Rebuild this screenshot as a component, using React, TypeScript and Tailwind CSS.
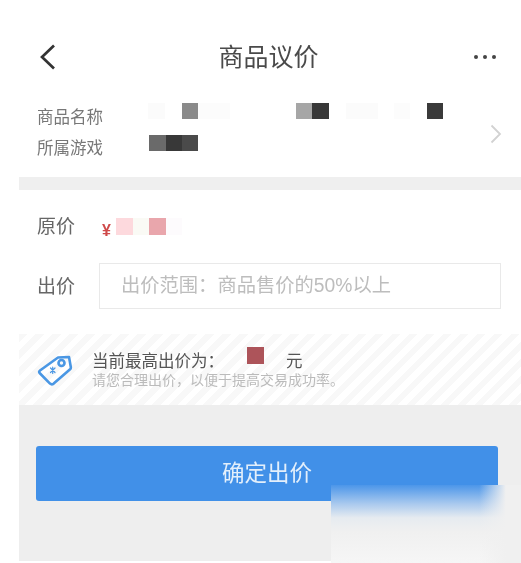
const font = "font-['Liberation_Sans','Noto_Sans_CJK_SC',sans-serif]";

// mosaic cells that hide the private values: [width, colour]
function Mosaic({ cells, h = "h-4" }: { cells: [number, string][]; h?: string }) {
    return (
        <div className="flex">
            {cells.map(([w, c], i) => (
                <div key={i} className={h} style={{ width: w, backgroundColor: c }} />
            ))}
        </div>
    );
}

function TagIcon() {
    return (
        <svg width="36" height="35" viewBox="0 0 36 35" fill="none" stroke="#4a97e4" strokeWidth="2.6" strokeLinejoin="round" strokeLinecap="round">
            <path d="M32 5 21 5.5 3 18.5Q1.6 19.6 2.6 21L13 31.6Q14.6 33 16.4 31.8L33.4 17Q34 16.2 33.8 15Z" />
            <circle cx="24.5" cy="11" r="3" />
            <path d="M13.5 16 18 20.5M18 16 13.5 20.5M15.7 15V21.5" strokeWidth="1.2" />
        </svg>
    );
}

export default function App() {
    return (
        <div className={`relative h-[563px] w-[521px] overflow-hidden bg-white ${font}`}>
            <div className="pl-[19px] blur-[0.5px]">
                <header className="flex h-[98px] items-center justify-between pl-[21px] pr-[25px] pt-[16px]">
                    <div className="w-[23px]">
                        <svg width="16" height="26" viewBox="0 0 16 26" fill="none" stroke="#333" strokeWidth="2.7">
                            <path d="M14 1.5 2 13l12 11.5" />
                        </svg>
                    </div>
                    <h1 className="text-[25px] font-normal leading-none text-[#4a4a4a]">商品议价</h1>
                    <div className="flex gap-[5px]">
                        <span className="h-1 w-1 rounded-full bg-[#444]" />
                        <span className="h-1 w-1 rounded-full bg-[#444]" />
                        <span className="h-1 w-1 rounded-full bg-[#444]" />
                    </div>
                </header>

                <section className="flex h-[79px] items-center justify-between pl-[18px] pr-[19px]">
                    <div className="mt-[5px] flex flex-col self-start">
                        <div className="flex h-[31px] items-start">
                            <span className="mt-[2px] w-[111px] text-[16.5px] leading-[24px] text-[#777]">商品名称</span>
                            <Mosaic
                                cells={[
                                    [17, "#fbfbfb"],
                                    [17, "#fff"],
                                    [16, "#8a8a8a"],
                                    [32, "#fcfcfc"],
                                    [66, "#fff"],
                                    [16, "#a6a6a6"],
                                    [17, "#383838"],
                                    [17, "#fff"],
                                    [32, "#fbfbfb"],
                                    [16, "#fff"],
                                    [16, "#fcfcfc"],
                                    [17, "#fff"],
                                    [16, "#3a3a3a"],
                                ]}
                            />
                        </div>
                        <div className="flex h-[31px] items-start">
                            <span className="mt-[2px] w-[112px] text-[16.5px] leading-[24px] text-[#777]">所属游戏</span>
                            <div className="mt-[1px]">
                                <Mosaic cells={[[17, "#6a6a6a"], [16, "#383838"], [16, "#4a4a4a"]]} />
                            </div>
                        </div>
                    </div>
                    <svg className="mt-[-7px]" width="12" height="20" viewBox="0 0 12 20" fill="none" stroke="#d2d2d2" strokeWidth="1.8">
                        <path d="M1.5 1.5 10 10l-8.5 8.5" />
                    </svg>
                </section>

                <div className="h-[13px] bg-[#efefef]" />

                <section className="h-[144px] pl-[18px] pr-[20px]">
                    <div className="flex h-[73px] items-center">
                        <span className="w-[65px] text-[19px] leading-none text-[#666]">原价</span>
                        <span className="mt-[8px] w-[14px] text-[16px] font-bold leading-none text-[#cf4a4a]">¥</span>
                        <div className="mt-[-1px]">
                            <Mosaic cells={[[17, "#fdd9dd"], [16, "#fafaf5"], [17, "#e9a6ac"], [16, "#fdfbfd"]]} h="h-[17px]" />
                        </div>
                    </div>
                    <div className="flex items-center">
                        <span className="w-[62px] text-[19px] leading-none text-[#666]">出价</span>
                        <input
                            readOnly
                            placeholder="出价范围：商品售价的50%以上"
                            className="h-[46px] flex-1 border-[1.5px] border-[#e9e9e9] pl-[21px] pr-2 text-[19.3px] outline-none placeholder:text-[#bdbdbd]"
                        />
                    </div>
                </section>

                <section className="flex h-[71px] items-center gap-[19px] bg-[repeating-linear-gradient(135deg,#f8f8f8_0,#f8f8f8_6px,#ffffff_6px,#ffffff_12px)] pl-[18px]">
                    <TagIcon />
                    <div className="flex flex-col">
                        <div className="flex items-center text-[16.5px] leading-[20px] text-[#555]">
                            <span className="w-[155px]">当前最高出价为：</span>
                            <div className="mt-[-10px]">
                                <Mosaic cells={[[17, "#ad545a"]]} h="h-[17px]" />
                            </div>
                            <span className="ml-[22px]">元</span>
                        </div>
                        <p className="text-[14px] leading-[18px] text-[#bbb]">请您合理出价，以便于提高交易成功率。</p>
                    </div>
                </section>

                <section className="h-[156px] bg-[#eeeeee] pl-[17px] pr-[23px] pt-[41px]">
                    <button className="flex h-[55px] w-full items-center justify-center rounded-[3px] bg-[#4190e8] text-[22.5px] text-[#e3effb]">
                        确定出价
                    </button>
                </section>
            </div>

            {/* smeared watermark over the corner */}
            <div className="absolute bottom-0 right-0 h-[78px] w-[190px] bg-[linear-gradient(to_right,transparent_78%,#f0f0f0_92%),linear-gradient(to_bottom,#4c96e9_0,#a9c9ee_24%,#e6ebf0_42%,#f0f0f0_60%,#f6f6f6_100%)]" />
        </div>
    );
}
